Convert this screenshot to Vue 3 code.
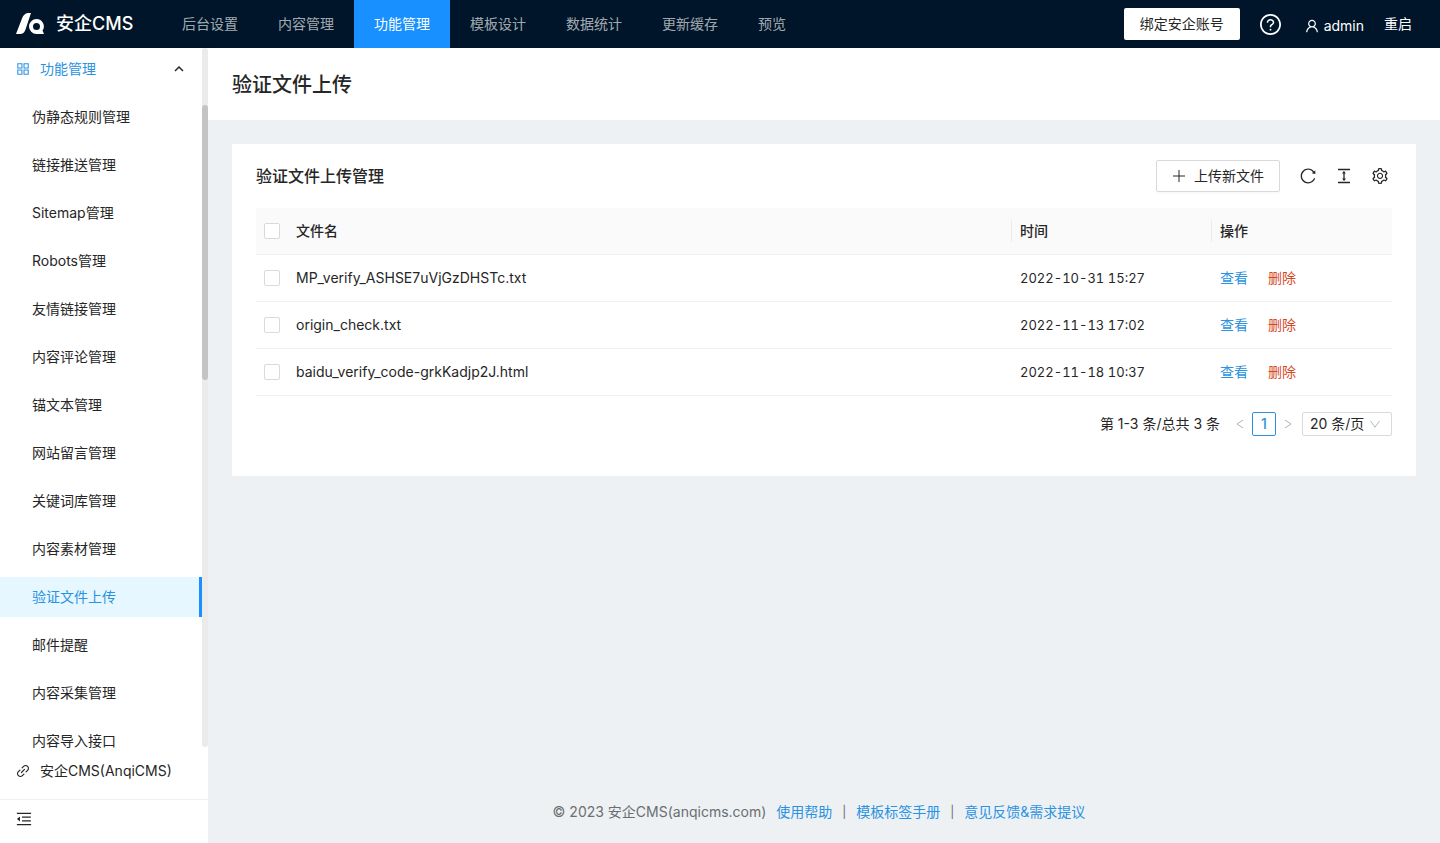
<script setup>
import { ref } from 'vue'

const icons = {
  appstore: 'M464 144H160c-8.8 0-16 7.2-16 16v304c0 8.8 7.2 16 16 16h304c8.8 0 16-7.2 16-16V160c0-8.8-7.2-16-16-16zm-52 268H212V212h200v200zm452-268H560c-8.8 0-16 7.2-16 16v304c0 8.8 7.2 16 16 16h304c8.8 0 16-7.2 16-16V160c0-8.8-7.2-16-16-16zm-52 268H612V212h200v200zM464 544H160c-8.8 0-16 7.2-16 16v304c0 8.8 7.2 16 16 16h304c8.8 0 16-7.2 16-16V560c0-8.8-7.2-16-16-16zm-52 268H212V612h200v200zm452-268H560c-8.8 0-16 7.2-16 16v304c0 8.8 7.2 16 16 16h304c8.8 0 16-7.2 16-16V560c0-8.8-7.2-16-16-16zm-52 268H612V612h200v200z',
  reload: 'M909.1 209.3l-56.4 44.1C775.8 155.1 656.2 92 521.9 92 290 92 102.3 279.5 102 511.5 101.7 743.7 289.8 932 521.9 932c181.3 0 335.8-115 394.6-276.1 1.5-4.2-.7-8.9-4.9-10.3l-56.7-19.5a8 8 0 00-10.1 4.8c-1.8 5-3.8 10-5.9 14.9-17.3 41-42.1 77.8-73.7 109.4A344.77 344.77 0 01655.9 829c-42.3 17.9-87.4 27-133.8 27-46.5 0-91.5-9.1-133.8-27A341.5 341.5 0 01279 755.2a342.16 342.16 0 01-73.7-109.4c-17.9-42.4-27-87.4-27-133.9s9.1-91.5 27-133.9c17.3-41 42.1-77.8 73.7-109.4 31.6-31.6 68.4-56.4 109.3-73.8 42.3-17.9 87.4-27 133.8-27 46.5 0 91.5 9.1 133.8 27a341.5 341.5 0 01109.3 73.8c9.9 9.9 19.2 20.4 27.8 31.4l-60.2 47a8 8 0 003 14.1l175.6 43c5 1.2 9.9-2.6 9.9-7.7l.8-180.9c-.1-6.6-7.8-10.3-13-6.2z',
  height: 'M840 836H184c-4.4 0-8 3.6-8 8v60c0 4.4 3.6 8 8 8h656c4.4 0 8-3.6 8-8v-60c0-4.4-3.6-8-8-8zm0-724H184c-4.4 0-8 3.6-8 8v60c0 4.4 3.6 8 8 8h656c4.4 0 8-3.6 8-8v-60c0-4.4-3.6-8-8-8zM610.8 378c6 0 9.4-7 5.7-11.7L515.7 238.7a7.14 7.14 0 00-11.3 0L403.6 366.3a7.23 7.23 0 005.7 11.7H476v268h-62.8c-6 0-9.4 7-5.7 11.7l100.8 127.5c2.9 3.7 8.5 3.7 11.3 0l100.8-127.5c3.7-4.7.4-11.7-5.7-11.7H548V378h62.8z',
  setting: 'M924.8 625.7l-65.5-56c3.1-19 4.7-38.4 4.7-57.8s-1.6-38.8-4.7-57.8l65.5-56a32.03 32.03 0 009.3-35.2l-.9-2.6a443.74 443.74 0 00-79.7-137.9l-1.8-2.1a32.12 32.12 0 00-35.1-9.5l-81.3 28.9c-30-24.6-63.5-44-99.7-57.6l-15.7-85a32.05 32.05 0 00-25.8-25.7l-2.7-.5c-52.1-9.4-106.9-9.4-159 0l-2.7.5a32.05 32.05 0 00-25.8 25.7l-15.8 85.4a351.86 351.86 0 00-99 57.4l-81.9-29.1a32 32 0 00-35.1 9.5l-1.8 2.1a446.02 446.02 0 00-79.7 137.9l-.9 2.6c-4.5 12.5-.8 26.5 9.3 35.2l66.3 56.6c-3.1 18.8-4.6 38-4.6 57.1 0 19.2 1.5 38.4 4.6 57.1L99 625.5a32.03 32.03 0 00-9.3 35.2l.9 2.6c18.1 50.4 44.9 96.9 79.7 137.9l1.8 2.1a32.12 32.12 0 0035.1 9.5l81.9-29.1c29.8 24.5 63.1 43.9 99 57.4l15.8 85.4a32.05 32.05 0 0025.8 25.7l2.7.5a449.4 449.4 0 00159 0l2.7-.5a32.05 32.05 0 0025.8-25.7l15.7-85a350 350 0 0099.7-57.6l81.3 28.9a32 32 0 0035.1-9.5l1.8-2.1c34.8-41.1 61.6-87.5 79.7-137.9l.9-2.6c4.5-12.3.8-26.3-9.3-35zM788.3 465.9c2.5 15.1 3.8 30.6 3.8 46.1s-1.3 31-3.8 46.1l-6.6 40.1 74.7 63.9a370.03 370.03 0 01-42.6 73.6L721 702.8l-31.4 25.8c-23.9 19.6-50.5 35-79.3 45.8l-38.1 14.3-17.9 97a377.5 377.5 0 01-85 0l-17.9-97.2-37.8-14.5c-28.5-10.8-55-26.2-78.7-45.7l-31.4-25.9-93.4 33.2c-17-22.9-31.2-47.6-42.6-73.6l75.5-64.5-6.5-40c-2.4-14.9-3.7-30.3-3.7-45.5 0-15.3 1.2-30.6 3.7-45.5l6.5-40-75.5-64.5c11.3-26.1 25.6-50.7 42.6-73.6l93.4 33.2 31.4-25.9c23.7-19.5 50.2-34.9 78.7-45.7l37.9-14.3 17.9-97.2c28.1-3.2 56.8-3.2 85 0l17.9 97 38.1 14.3c28.7 10.8 55.4 26.2 79.3 45.8l31.4 25.8 92.8-32.9c17 22.9 31.2 47.6 42.6 73.6L781.8 426l6.5 39.9zM512 326c-97.2 0-176 78.8-176 176s78.8 176 176 176 176-78.8 176-176-78.8-176-176-176zm79.2 255.2A111.6 111.6 0 01512 614c-29.9 0-58-11.7-79.2-32.8A111.6 111.6 0 01400 502c0-29.9 11.7-58 32.8-79.2C454 401.6 482.1 390 512 390c29.9 0 58 11.6 79.2 32.8A111.6 111.6 0 01624 502c0 29.9-11.7 58-32.8 79.2z',
  fold: 'M408 442h480c4.4 0 8-3.6 8-8v-56c0-4.4-3.6-8-8-8H408c-4.4 0-8 3.6-8 8v56c0 4.4 3.6 8 8 8zm-8 204c0 4.4 3.6 8 8 8h480c4.4 0 8-3.6 8-8v-56c0-4.4-3.6-8-8-8H408c-4.4 0-8 3.6-8 8v56zm504-486H120c-4.4 0-8 3.6-8 8v56c0 4.4 3.6 8 8 8h784c4.4 0 8-3.6 8-8v-56c0-4.4-3.6-8-8-8zm0 632H120c-4.4 0-8 3.6-8 8v56c0 4.4 3.6 8 8 8h784c4.4 0 8-3.6 8-8v-56c0-4.4-3.6-8-8-8zM115.4 518.9L271.7 642c5.8 4.6 14.4.5 14.4-6.9V388.9c0-7.4-8.5-11.5-14.4-6.9L115.4 505.1a8.74 8.74 0 000 13.8z',
  link: 'M574 665.4a8.03 8.03 0 00-11.3 0L446.5 781.6c-53.8 53.8-144.6 59.5-204 0-59.5-59.5-53.8-150.2 0-204l116.2-116.2c3.1-3.1 3.1-8.2 0-11.3l-39.8-39.8a8.03 8.03 0 00-11.3 0L191.4 526.5c-84.6 84.6-84.6 221.5 0 306s221.5 84.6 306 0l116.2-116.2c3.1-3.1 3.1-8.2 0-11.3L574 665.4zm258.6-474c-84.6-84.6-221.5-84.6-306 0L410.3 307.6a8.03 8.03 0 000 11.3l39.7 39.7c3.1 3.1 8.2 3.1 11.3 0l116.2-116.2c53.8-53.8 144.6-59.5 204 0 59.5 59.5 53.8 150.2 0 204L665.3 562.6a8.03 8.03 0 000 11.3l39.8 39.8c3.1 3.1 8.2 3.1 11.3 0l116.2-116.2c84.5-84.6 84.5-221.5 0-306.1zM610.1 372.3a8.03 8.03 0 00-11.3 0L372.3 598.7a8.03 8.03 0 000 11.3l39.6 39.6c3.1 3.1 8.2 3.1 11.3 0l226.4-226.4c3.1-3.1 3.1-8.2 0-11.3l-39.5-39.6z',
  user: 'M858.5 763.6a374 374 0 00-80.6-119.5 375.63 375.63 0 00-119.5-80.6c-.4-.2-.8-.3-1.2-.5C719.5 518 760 444.7 760 362c0-137-111-248-248-248S264 225 264 362c0 82.7 40.5 156 102.8 201.1-.4.2-.8.3-1.2.5-44.8 18.9-85 46-119.5 80.6a375.63 375.63 0 00-80.6 119.5A371.7 371.7 0 00136 901.8a8 8 0 008 8.2h60c4.4 0 7.9-3.5 8-7.8 2-77.2 33-149.5 87.8-204.3 56.7-56.7 132-87.9 212.2-87.9s155.5 31.2 212.2 87.9C779 752.7 810 825 812 902.2c.1 4.4 3.6 7.8 8 7.8h60a8 8 0 008-8.2c-1-47.8-10.9-94.3-29.5-138.2zM512 534c-45.9 0-89.1-17.9-121.6-50.4S340 407.9 340 362c0-45.9 17.9-89.1 50.4-121.6S466.1 190 512 190s89.1 17.9 121.6 50.4S684 316.1 684 362c0 45.9-17.9 89.1-50.4 121.6S557.9 534 512 534z',
  question: 'M512 64C264.6 64 64 264.6 64 512s200.6 448 448 448 448-200.6 448-448S759.4 64 512 64zm0 820c-205.4 0-372-166.6-372-372s166.6-372 372-372 372 166.6 372 372-166.6 372-372 372zM623.6 316.7C593.6 290.4 554 276 512 276s-81.6 14.5-111.6 40.7C369.2 344 352 380.7 352 420v7.6c0 4.4 3.6 8 8 8h48c4.4 0 8-3.6 8-8V420c0-44.1 43.1-80 96-80s96 35.9 96 80c0 31.1-22 59.6-56.1 72.7-21.2 8.1-39.2 22.3-52.1 40.9-13.1 19-19.9 41.8-19.9 64.9V620c0 4.4 3.6 8 8 8h48c4.4 0 8-3.6 8-8v-22.7a48.3 48.3 0 0130.9-44.8c59-22.7 97.1-74.7 97.1-132.5.1-39.3-17.1-76-48.3-103.3zM472 732a40 40 0 1080 0 40 40 0 10-80 0z',
}

const topNav = ['后台设置', '内容管理', '功能管理', '模板设计', '数据统计', '更新缓存', '预览']
const activeTop = ref('功能管理')

const sideNav = [
  '伪静态规则管理', '链接推送管理', 'Sitemap管理', 'Robots管理', '友情链接管理',
  '内容评论管理', '锚文本管理', '网站留言管理', '关键词库管理', '内容素材管理',
  '验证文件上传', '邮件提醒', '内容采集管理', '内容导入接口',
]
const activeSide = ref('验证文件上传')

const files = [
  { name: 'MP_verify_ASHSE7uVjGzDHSTc.txt', time: '2022-10-31 15:27' },
  { name: 'origin_check.txt', time: '2022-11-13 17:02' },
  { name: 'baidu_verify_code-grkKadjp2J.html', time: '2022-11-18 10:37' },
]
const selected = ref([])
const toggleAll = (e) => {
  selected.value = e.target.checked ? files.map((f) => f.name) : []
}
</script>

<template>
  <div class="app">
    <header class="topbar">
      <a class="brand" href="#">
        <svg class="logo" viewBox="0 0 28 22" aria-hidden="true">
          <path fill="#fff" d="M0 21 6 5.500Q8 0 12.500 0H15L9.500 16.500Q8 21 4 21Z" />
          <path fill="#fff" fill-rule="evenodd" d="M20.500 6a7.300 7.300 0 0 1 6 11.500L28 21h-7.500a7.500 7.500 0 0 1 0-15Zm0 4a3.500 3.500 0 1 0 0 7 3.500 3.500 0 0 0 0-7Z" />
        </svg>
        <span>安企CMS</span>
      </a>
      <nav class="topnav">
        <a v-for="item in topNav" :key="item" href="#" :class="{ active: item === activeTop }" @click.prevent="activeTop = item">{{ item }}</a>
      </nav>
      <div class="actions">
        <button class="bind" type="button">绑定安企账号</button>
        <button class="plain" type="button" aria-label="帮助">
          <svg class="icon icon-help" viewBox="64 64 896 896"><path :d="icons.question" /></svg>
        </button>
        <a class="user" href="#">
          <svg class="icon icon-14" viewBox="64 64 896 896"><path :d="icons.user" /></svg>
          <span>admin</span>
        </a>
        <a class="restart" href="#">重启</a>
      </div>
    </header>

    <div class="body">
      <aside class="sidebar">
        <div class="scroller">
          <nav class="menu">
            <button class="group" type="button" aria-expanded="true">
              <svg class="icon icon-14" viewBox="64 64 896 896"><path :d="icons.appstore" /></svg>
              <span>功能管理</span>
              <svg class="caret" viewBox="0 0 10 10"><path d="M1 7l4-4 4 4" /></svg>
            </button>
            <a v-for="item in sideNav" :key="item" href="#" :class="{ active: item === activeSide }" @click.prevent="activeSide = item">{{ item }}</a>
          </nav>
          <div class="track"><div class="thumb"></div></div>
        </div>
        <a class="site" href="#">
          <svg class="icon icon-14" viewBox="64 64 896 896"><path :d="icons.link" /></svg>
          <span>安企CMS(AnqiCMS)</span>
        </a>
        <button class="fold" type="button" aria-label="收起菜单">
          <svg class="icon icon-16" viewBox="64 64 896 896"><path :d="icons.fold" /></svg>
        </button>
      </aside>

      <div class="content">
        <div class="page-head"><h1>验证文件上传</h1></div>
        <main class="card">
          <div class="toolbar">
            <h2>验证文件上传管理</h2>
            <div class="tools">
              <button class="upload" type="button">
                <svg class="plus" viewBox="0 0 14 14"><path d="M7 1v12M1 7h12" /></svg>
                <span>上传新文件</span>
              </button>
              <button v-for="t in [['reload', '刷新'], ['height', '密度'], ['setting', '列设置']]" :key="t[0]" class="tool" type="button" :aria-label="t[1]">
                <svg class="icon icon-16" viewBox="64 64 896 896"><path :d="icons[t[0]]" /></svg>
              </button>
            </div>
          </div>

          <table>
            <colgroup>
              <col class="col-check" /><col /><col class="col-time" /><col class="col-ops" />
            </colgroup>
            <thead>
              <tr>
                <th class="check"><input type="checkbox" aria-label="全选" :checked="selected.length === files.length" @change="toggleAll" /></th>
                <th class="split">文件名</th>
                <th class="split">时间</th>
                <th>操作</th>
              </tr>
            </thead>
            <tbody>
              <tr v-for="f in files" :key="f.name">
                <td class="check"><input v-model="selected" type="checkbox" :value="f.name" :aria-label="f.name" /></td>
                <td>{{ f.name }}</td>
                <td class="time">{{ f.time }}</td>
                <td>
                  <div class="ops"><a href="#">查看</a><a class="danger" href="#">删除</a></div>
                </td>
              </tr>
            </tbody>
          </table>

          <div class="pager">
            <span class="total">第 1-3 条/总共 3 条</span>
            <button class="arrow" type="button" disabled aria-label="上一页"><svg viewBox="0 0 8 10"><path d="M7 1 1 5l6 4" /></svg></button>
            <button class="current" type="button">1</button>
            <button class="arrow" type="button" disabled aria-label="下一页"><svg viewBox="0 0 8 10"><path d="M1 1l6 4-6 4" /></svg></button>
            <div class="size">
              <select aria-label="每页条数">
                <option>20 条/页</option>
                <option>50 条/页</option>
              </select>
              <svg viewBox="0 0 12 10"><path d="M1 1l5 7 5-7" /></svg>
            </div>
          </div>
        </main>

        <footer class="footer">
          <span>© 2023 安企CMS(anqicms.com)</span>
          <a href="#">使用帮助</a>
          <span class="bar">|</span>
          <a href="#">模板标签手册</a>
          <span class="bar">|</span>
          <a href="#">意见反馈&amp;需求提议</a>
        </footer>
      </div>
    </div>
  </div>
</template>

<style>
body {
  margin: 0;
}
</style>

<style scoped>
* {
  box-sizing: border-box;
}
.app {
  display: flex;
  flex-direction: column;
  height: 100vh;
  font: 14px/22px Inter, "Noto Sans CJK SC", sans-serif;
  color: #262626;
}
a {
  color: #2a92e0;
  text-decoration: none;
}
button {
  padding: 0;
  border: 0;
  background: none;
  font: inherit;
  color: inherit;
  cursor: pointer;
}
.icon {
  display: block;
  flex: none;
  fill: currentColor;
}
.icon-14 {
  width: 14px;
  height: 14px;
}
.icon-16 {
  width: 16px;
  height: 16px;
}
.icon-help {
  width: 21px;
  height: 21px;
}

/* Top bar */
.topbar {
  display: flex;
  flex: none;
  height: 48px;
  padding: 0 28px 0 16px;
  background: #001529;
}
.brand {
  display: flex;
  align-items: center;
  gap: 12px;
  width: 146px;
  color: #fff;
  font-size: 18px;
  font-weight: 500;
}
.logo {
  width: 28px;
  height: 22px;
}
.topnav {
  display: flex;
  flex: 1;
}
.topnav a {
  padding: 0 20px;
  line-height: 48px;
  color: rgba(255, 255, 255, 0.65);
}
.topnav a.active {
  background: #1890ff;
  color: #fff;
}
.actions {
  display: flex;
  align-items: center;
  gap: 20px;
  color: #fff;
}
.bind {
  height: 32px;
  padding: 0 16px;
  border-radius: 2px;
  background: #fff;
  color: #262626;
}
.user {
  display: flex;
  align-items: center;
  gap: 5px;
  margin-left: 4px;
  padding-top: 3px;
  color: #fff;
}
.restart {
  color: #fff;
}

/* Sidebar */
.body {
  display: flex;
  flex: 1;
  min-height: 0;
}
.sidebar {
  display: flex;
  flex-direction: column;
  flex: none;
  width: 208px;
  background: #fff;
  box-shadow: 2px 0 8px rgba(29, 35, 41, 0.05);
}
.scroller {
  display: flex;
  flex: 1;
  min-height: 0;
}
.menu {
  display: flex;
  flex: 1;
  flex-direction: column;
  gap: 8px;
  padding-top: 1px;
  overflow: hidden;
}
.group {
  display: flex;
  flex: none;
  align-items: center;
  gap: 10px;
  height: 40px;
  padding: 0 18px 0 16px;
  color: #2a92e0;
}
.caret {
  width: 10px;
  height: 10px;
  margin-left: auto;
  fill: none;
  stroke: #262626;
  stroke-width: 1.5;
}
.menu a {
  flex: none;
  height: 40px;
  padding-left: 32px;
  line-height: 40px;
  color: #262626;
}
.menu a.active {
  border-right: 3px solid #1890ff;
  background: #e6f7ff;
  color: #2a92e0;
}
.track {
  width: 6px;
  margin-bottom: 6px;
  border-radius: 3px;
  background: #ebebeb;
}
.thumb {
  height: 39.4%;
  margin-top: 57px;
  border-radius: 3px;
  background: #c4c4c4;
}
.site {
  display: flex;
  align-items: center;
  gap: 10px;
  height: 46px;
  padding: 0 16px 10px;
  color: #262626;
}
.fold {
  display: flex;
  align-items: center;
  height: 44px;
  padding: 0 16px 6px;
  border-top: 1px solid #f0f0f0;
}

/* Content */
.content {
  display: flex;
  flex: 1;
  flex-direction: column;
  min-width: 0;
  background: #edf1f4;
}
.page-head {
  padding: 21px 24px 19px;
  background: #fff;
}
h1,
h2 {
  margin: 0;
  font-weight: 500;
}
h1 {
  font-size: 20px;
  line-height: 32px;
}
h2 {
  font-size: 16px;
  line-height: 32px;
}
.card {
  margin: 24px;
  padding: 0 24px 40px;
  background: #fff;
}
.toolbar {
  display: flex;
  align-items: center;
  justify-content: space-between;
  height: 64px;
}
.tools {
  display: flex;
  align-items: center;
  gap: 20px;
  padding-right: 4px;
}
.upload {
  display: flex;
  align-items: center;
  gap: 8px;
  height: 32px;
  padding: 0 15px;
  border: 1px solid #d9d9d9;
  border-radius: 2px;
  box-shadow: 0 2px 0 rgba(0, 0, 0, 0.02);
}
.plus {
  width: 14px;
  height: 14px;
  fill: none;
  stroke: currentColor;
}

/* File table */
table {
  width: 100%;
  table-layout: fixed;
  border-collapse: separate;
  border-spacing: 0;
}
.col-check {
  width: 32px;
}
.col-time {
  width: 200px;
}
.col-ops {
  width: 180px;
}
th,
td {
  height: 47px;
  padding: 0 8px;
  border-bottom: 1px solid #f0f0f0;
  text-align: left;
}
th {
  position: relative;
  background: #fafafa;
  font-weight: 500;
}
.time {
  font-size: 13px;
  font-variant-numeric: tabular-nums;
}
.split::after {
  content: "";
  position: absolute;
  top: 12px;
  right: 0;
  width: 1px;
  height: 22px;
  background: #ebebeb;
}
input[type="checkbox"] {
  display: block;
  width: 16px;
  height: 16px;
  margin: 0;
  border: 1px solid #d9d9d9;
  border-radius: 2px;
  background: #fff;
  appearance: none;
}
input[type="checkbox"]:checked {
  border-color: #1890ff;
  background: #1890ff;
}
.ops {
  display: flex;
  gap: 20px;
}
.danger {
  color: #d4471f;
}

/* Pagination */
.pager {
  display: flex;
  align-items: center;
  justify-content: flex-end;
  margin-top: 16px;
}
.total {
  margin-right: 8px;
}
.arrow,
.current {
  display: flex;
  align-items: center;
  justify-content: center;
  width: 24px;
  height: 24px;
}
.arrow svg {
  width: 8px;
  height: 10px;
}
.pager svg {
  fill: none;
  stroke: #b0b0b0;
}
.current {
  border: 1px solid #2a92e0;
  border-radius: 2px;
  color: #2a92e0;
  font-weight: 500;
}
.size {
  position: relative;
  margin-left: 2px;
}
.size select {
  display: block;
  width: 90px;
  height: 24px;
  padding: 0 7px;
  border: 1px solid #d9d9d9;
  border-radius: 2px;
  background: #fff;
  color: inherit;
  font: inherit;
  appearance: none;
}
.size svg {
  position: absolute;
  top: 8px;
  right: 11px;
  width: 12px;
  height: 9px;
  pointer-events: none;
}

/* Footer */
.footer {
  display: flex;
  justify-content: center;
  gap: 10px;
  margin-top: auto;
  padding: 0 34px 20px 24px;
  color: #6b6e70;
}
.bar {
  font-size: 12px;
}
</style>
